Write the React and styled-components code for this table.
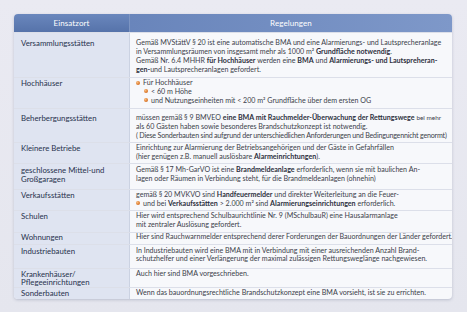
import React from "react";
import styled, { createGlobalStyle } from "styled-components";

const GlobalStyle = createGlobalStyle`
  html, body {
    margin: 0;
    padding: 0;
  }
  body {
    background: #e8e9f1;
    font-family: Lato, "Open Sans", "Liberation Sans", sans-serif;
  }
`;

const rows = [
  {
    label: ["Versammlungsstätten"],
    h: 45,
    pt: 6,
    lines: [
      <>Gemäß MVStättV § 20 ist eine automatische BMA und eine Alarmierungs- und Lautsprecheranlage</>,
      <>in Versammlungsräumen von insgesamt mehr als 1000 m² <b>Grundfläche notwendig</b>.</>,
      <>Gemäß Nr. 6.4 MHHR <b>für Hochhäuser</b> werden eine <b>BMA</b> und <b>Alarmierungs- und Lautspreheran-</b></>,
      <><b>gen-</b>und Lautsprecheranlagen gefordert.</>,
    ],
  },
  {
    label: ["Hochhäuser"],
    h: 31,
    pt: 1,
    lines: [
      { bullet: 0, text: <>Für Hochhäuser</> },
      { bullet: 1, text: <>&lt; 60 m Höhe</> },
      { bullet: 1, text: <>und Nutzungseinheiten mit &lt; 200 m² Grundfläche über dem ersten OG</> },
    ],
  },
  {
    label: ["Beherbergungsstätten"],
    h: 34,
    pt: 5,
    lines: [
      <>müssen gemäß § 9 BMVEO <b>eine BMA mit Rauchmelder-Überwachung der Rettungswege</b> <small>bei mehr</small></>,
      <>als 60 Gästen haben sowie besonderes Brandschutzkonzept ist notwendig.</>,
      { tight: true, text: <>( Diese Sonderbauten sind aufgrund der unterschiedlichen Anforderungen und Bedingungennicht genormt)</> },
    ],
  },
  {
    label: ["Kleinere Betriebe"],
    h: 21,
    pt: 1,
    lines: [
      <>Einrichtung zur Alarmierung der Betriebsangehörigen und der Gäste in Gefahrfällen</>,
      <>(hier genügen z.B. manuell auslösbare <b>Alarmeinrichtungen</b>).</>,
    ],
  },
  {
    label: ["geschlossene Mittel-und", "Großgaragen"],
    h: 26,
    pt: 2,
    lines: [
      <>Gemäß § 17 Mh-GarVO ist eine <b>Brandmeldeanlage</b> erforderlich, wenn sie mit baulichen An-</>,
      <>lagen oder Räumen in Verbindung steht, für die Brandmeldeanlagen (ohnehin)</>,
    ],
  },
  {
    label: ["Verkaufsstätten"],
    h: 21,
    pt: 1,
    lines: [
      <>gemäß § 20 MVKVO sind <b>Handfeuermelder</b> und direkter Weiterleitung an die Feuer-</>,
      { bullet: 0, text: <>und bei <b>Verkaufsstätten</b> &gt; 2.000 m² sind <b>Alarmierungseinrichtungen</b> erforderlich.</> },
    ],
  },
  {
    label: ["Schulen"],
    h: 22,
    pt: 1,
    lines: [
      <>Hier wird entsprechend Schulbaurichtlinie Nr. 9 (MSchulbauR) eine Hausalarmanlage</>,
      <>mit zentraler Auslösung gefordert.</>,
    ],
  },
  {
    label: ["Wohnungen"],
    h: 11.5,
    pt: 0,
    lines: [
      <>Hier sind Rauchwarnmelder entsprechend derer Forderungen der Bauordnungen der Länder gefordert.</>,
    ],
  },
  {
    label: ["Industriebauten"],
    h: 24,
    pt: 2,
    lines: [
      <>In Industriebauten wird eine BMA mit in Verbindung mit einer ausreichenden Anzahl Brand-</>,
      <>schutzhelfer und einer Verlängerung der maximal zulässigen Rettungsweglänge nachgewiesen.</>,
    ],
  },
  {
    label: ["Krankenhäuser/", "Pflegeeinrichtungen"],
    h: 19,
    pt: 1,
    lines: [<>Auch hier sind BMA vorgeschrieben.</>],
  },
  {
    label: ["Sonderbauten"],
    h: 12,
    pt: 0.5,
    lines: [
      <>Wenn das bauordnungsrechtliche Brandschutzkonzept eine BMA vorsieht, ist sie zu errichten.</>,
    ],
  },
];

const App = () => {
  return (
    <>
      <GlobalStyle />
      <Page>
        <Table>
          <HeadRow>
            <HeadCell $left>Einsatzort</HeadCell>
            <HeadCell>Regelungen</HeadCell>
          </HeadRow>
          {rows.map((row, i) => (
            <Row key={i} $h={row.h}>
              <Label $pt={row.pt}>
                {row.label.map((l) => (
                  <Line key={l}>{l}</Line>
                ))}
              </Label>
              <Content $pt={row.pt}>
                {row.lines.map((line, j) => {
                  if (line && line.text !== undefined) {
                    return (
                      <Line key={j} $indent={line.bullet ? 8 : 0} $tight={line.tight}>
                        {line.bullet !== undefined && <Bullet />}
                        {line.text}
                      </Line>
                    );
                  }
                  return <Line key={j}>{line}</Line>;
                })}
              </Content>
            </Row>
          ))}
        </Table>
      </Page>
    </>
  );
};

export default App;

const Page = styled.div`
  width: 467px;
  height: 312px;
  box-sizing: border-box;
  padding: 14px 15px 0 14px;
  background: linear-gradient(180deg, #eaeaf2 0%, #e5e6ee 100%);
`;

const Table = styled.div`
  width: 438px;
  border-radius: 4px;
  overflow: hidden;
  background: #f7f8fb;
  box-shadow: 0 1px 3px rgba(60, 70, 110, 0.25);
`;

const HeadRow = styled.div`
  display: grid;
  grid-template-columns: 116px 1fr;
  height: 18px;
`;

const HeadCell = styled.div`
  display: flex;
  align-items: center;
  justify-content: center;
  color: #ffffff;
  font-size: 8px;
  letter-spacing: 0.1px;
  background: ${({ $left }) =>
    $left
      ? "linear-gradient(180deg, #6a87bd 0%, #5673aa 100%)"
      : "linear-gradient(90deg, #6985bb 0%, #7e98c9 100%)"};
  border-right: ${({ $left }) => ($left ? "1px solid #7d95c2" : "none")};
`;

const Row = styled.div`
  display: grid;
  grid-template-columns: 116px 1fr;
  box-sizing: border-box;
  min-height: ${({ $h }) => $h}px;
  border-top: 1px solid #dcdfe9;
`;

const Label = styled.div`
  padding: ${({ $pt }) => $pt}px 4px 0 7px;
  background: #dfe4f1;
  border-right: 1px solid #cbd2e2;
  color: #27324d;
  font-size: 7.8px;
  line-height: 8.9px;
  letter-spacing: 0.05px;
`;

const Content = styled.div`
  padding: ${({ $pt }) => $pt}px 4px 0 6px;
  overflow: hidden;
  color: #3b3e4a;
  font-size: 7.1px;
  line-height: 8.9px;

  b {
    font-weight: 700;
    color: #2d3040;
  }

  small {
    font-size: 6.4px;
  }
`;

const Line = styled.span`
  display: block;
  white-space: nowrap;
  padding-left: ${({ $indent }) => $indent || 0}px;
  letter-spacing: ${({ $tight }) => ($tight ? "-0.2px" : "0")};
`;

const Bullet = styled.span`
  display: inline-block;
  width: 4px;
  height: 4px;
  margin: 0 3px 0 0;
  border-radius: 50%;
  vertical-align: 0.5px;
  background: radial-gradient(circle at 35% 35%, #f7bd7e 0%, #e07f33 55%, #b75a1a 100%);
`;
